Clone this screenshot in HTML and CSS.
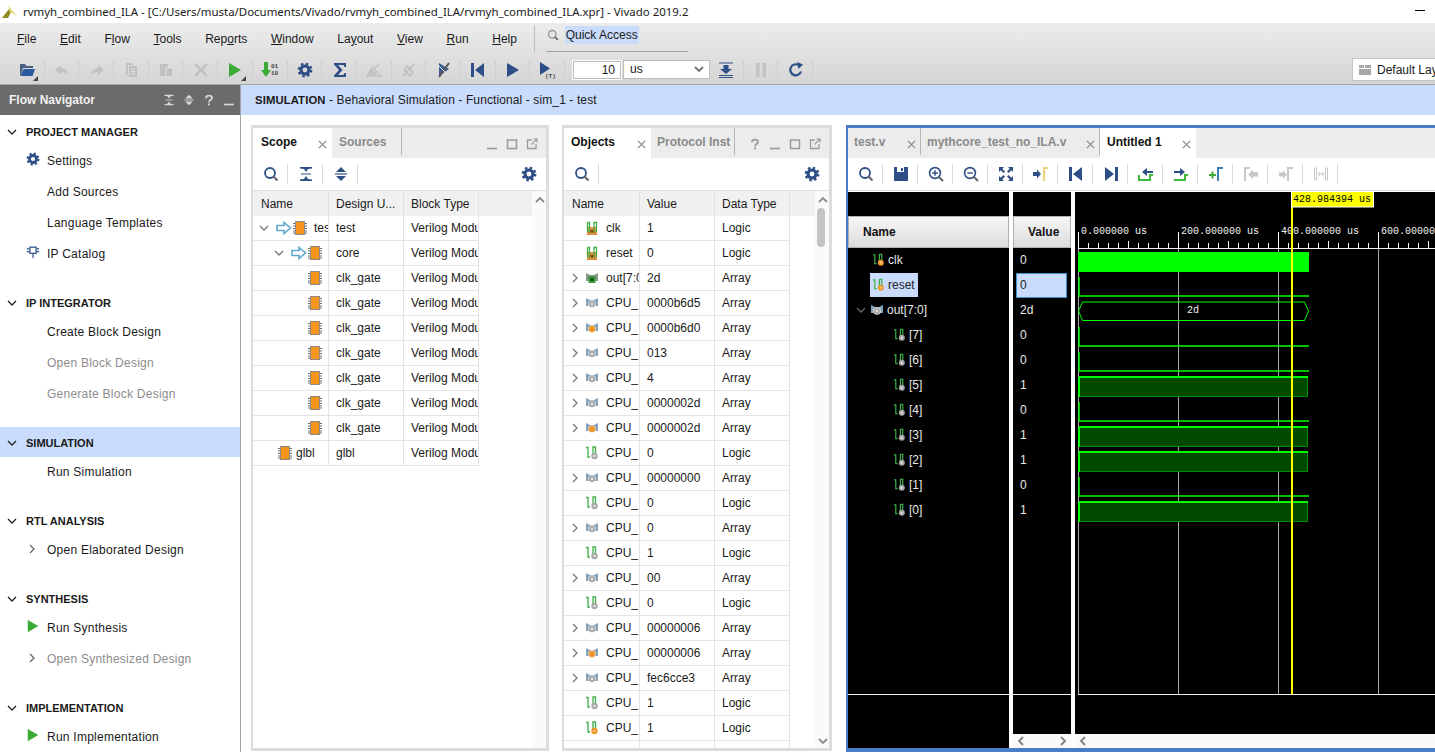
FILE: index.html
```html
<!DOCTYPE html>
<html lang="en">
  <head>
    <meta charset="UTF-8" />
    <title>rvmyh_combined_ILA - Vivado 2019.2</title>
    <link rel="stylesheet" href="styles.css">
  </head>
  <body>
    <!-- icon sheet -->
    <svg class="defs" width="0" height="0">
      <symbol id="gear" viewBox="0 0 16 16">
        <circle cx="8" cy="8" r="6.1" fill="none" stroke="currentColor" stroke-width="2.6" stroke-dasharray="2.4 2.39"/>
        <circle cx="8" cy="8" r="4" fill="none" stroke="currentColor" stroke-width="3.2"/>
      </symbol>
      <symbol id="search" viewBox="0 0 16 16">
        <circle cx="7" cy="7" r="5" fill="none" stroke="currentColor" stroke-width="1.8"/>
        <path d="M10.5 10.5l4 4" stroke="#666" stroke-width="2.2"/>
      </symbol>
      <symbol id="zoomin" viewBox="0 0 16 16">
        <circle cx="7" cy="7" r="5.4" fill="none" stroke="currentColor" stroke-width="1.6"/>
        <path d="M4.2 7h5.6M7 4.2v5.6" stroke="currentColor" stroke-width="1.4"/>
        <path d="M11 11l4 4" stroke="#666" stroke-width="2.2"/>
      </symbol>
      <symbol id="zoomout" viewBox="0 0 16 16">
        <circle cx="7" cy="7" r="5.4" fill="none" stroke="currentColor" stroke-width="1.6"/>
        <path d="M4.2 7h5.6" stroke="currentColor" stroke-width="1.4"/>
        <path d="M11 11l4 4" stroke="#666" stroke-width="2.2"/>
      </symbol>
      <symbol id="collapse" viewBox="0 0 16 16">
        <path d="M2 1h12v1.500l-4 .5-2 3-2-3-4-.5zM2 15h12v-1.500l-4-.5-2-3-2 3-4 .5z" fill="currentColor"/>
        <path d="M3 8h10" stroke="currentColor"/>
      </symbol>
      <symbol id="expand" viewBox="0 0 16 16">
        <path d="M8 1l5 5H3zM8 15l-5-5h10z" fill="currentColor"/>
        <path d="M2 8h12" stroke="currentColor" stroke-width="1.2"/>
      </symbol>
      <symbol id="close" viewBox="0 0 10 10">
        <path d="M1 1l8 8M9 1l-8 8" stroke="currentColor" stroke-width="1.4"/>
      </symbol>
      <symbol id="min" viewBox="0 0 12 12"><path d="M1 10.500h10" stroke="currentColor" stroke-width="1.6"/></symbol>
      <symbol id="max" viewBox="0 0 12 12"><rect x="1.500" y="2" width="9" height="8.500" fill="none" stroke="currentColor" stroke-width="1.5"/></symbol>
      <symbol id="pop" viewBox="0 0 12 12">
        <path d="M6 2H1.500v8.500H10V6" fill="none" stroke="currentColor" stroke-width="1.3"/>
        <path d="M5.500 6.500L11 1M7.500 1H11v3.500" fill="none" stroke="currentColor" stroke-width="1.1"/>
      </symbol>
      <symbol id="help" viewBox="0 0 12 16">
        <path d="M2 5.500C2 1 10 1 10 5c0 3-4 3-4 6" fill="none" stroke="currentColor" stroke-width="2.4"/>
        <rect x="4.700" y="12.500" width="2.600" height="2.600" fill="currentColor"/>
      </symbol>
      <symbol id="chev-d" viewBox="0 0 10 10"><path d="M1 3l4 4 4-4" fill="none" stroke="currentColor" stroke-width="1.3"/></symbol>
      <symbol id="chev-r" viewBox="0 0 10 10"><path d="M3 1l4 4-4 4" fill="none" stroke="currentColor" stroke-width="1.3"/></symbol>
      <symbol id="chev-u" viewBox="0 0 10 10"><path d="M1 7l4-4 4 4" fill="none" stroke="currentColor" stroke-width="1.8"/></symbol>
      <symbol id="chev-l" viewBox="0 0 10 10"><path d="M7 1L3 5l4 4" fill="none" stroke="currentColor" stroke-width="1.8"/></symbol>
      <symbol id="chev-rb" viewBox="0 0 10 10"><path d="M3 1l4 4-4 4" fill="none" stroke="currentColor" stroke-width="1.8"/></symbol>
      <symbol id="chev-db" viewBox="0 0 10 10"><path d="M1 3l4 4 4-4" fill="none" stroke="currentColor" stroke-width="1.8"/></symbol>
      <symbol id="play" viewBox="0 0 16 16"><path d="M2 1l12 7-12 7z" fill="currentColor"/></symbol>
      <symbol id="ipcat" viewBox="0 0 16 16">
        <rect x="4.500" y="2.500" width="7" height="7" fill="none" stroke="currentColor" stroke-width="1.4"/>
        <path d="M1 4.500h3M1 7.500h3M12 4.500h3M12 7.500h3M8 10v5" stroke="currentColor" stroke-width="1.3"/>
      </symbol>
      <symbol id="folder" viewBox="0 0 18 18">
        <path d="M2 3h5l1.500 2H15v2H5L3 14H2z" fill="#4a5f84"/>
        <path d="M5.500 8H17l-2.500 7H2.500z" fill="#2c5aa0"/>
      </symbol>
      <symbol id="undo" viewBox="0 0 16 16"><path d="M7 3L1 8l6 5v-3c3 0 5 1 7 3-.5-4-3-7-7-7z" fill="currentColor"/></symbol>
      <symbol id="redo" viewBox="0 0 16 16"><path d="M9 3l6 5-6 5v-3c-3 0-5 1-7 3 .5-4 3-7 7-7z" fill="currentColor"/></symbol>
      <symbol id="copy" viewBox="0 0 16 16">
        <path d="M3 1h7v2H5v10H3z" fill="currentColor"/>
        <path d="M6 4h8v11H6z" fill="currentColor"/>
        <path d="M8 7h4M8 9.500h4M8 12h4" stroke="#e2e2e2"/>
      </symbol>
      <symbol id="paste" viewBox="0 0 16 16">
        <path d="M2 2h8v12H2z" fill="currentColor"/>
        <path d="M8 6h7v9H8z" fill="currentColor" stroke="#e0e0e0"/>
      </symbol>
      <symbol id="cross" viewBox="0 0 16 16"><path d="M2 2l12 12M14 2L2 14" stroke="currentColor" stroke-width="2.6"/></symbol>
      <symbol id="sigma" viewBox="0 0 16 16"><path d="M2 1h12v4h-1.500l-1-2H6l4.500 5L6 13h5.500l1-2H14v4H2v-1.500L7 8 2 2.500z" fill="currentColor"/></symbol>
      <symbol id="nochk" viewBox="0 0 16 16">
        <path d="M1 14h14l-9-9zM6 9l7-7" fill="currentColor" stroke="currentColor" stroke-width="1.5"/>
        <path d="M3 3l10 11" stroke="#e0e0e0"/>
      </symbol>
      <symbol id="nopin" viewBox="0 0 16 16">
        <path d="M6 4l6 6-3 4-6-6zM13 2L2 14" fill="none" stroke="currentColor" stroke-width="1.8"/>
      </symbol>
      <symbol id="break" viewBox="0 0 16 16">
        <path d="M3 1l10 6-10 7z" fill="#3b5c94"/>
        <path d="M13 1L3 15" stroke="#555" stroke-width="2"/>
        <path d="M2 3l11 11" stroke="#e8e8e8"/>
      </symbol>
      <symbol id="first" viewBox="0 0 16 16"><path d="M1 1h3v14H1zM14 1v14L5 8z" fill="currentColor"/></symbol>
      <symbol id="last" viewBox="0 0 16 16"><path d="M15 1h-3v14h3zM2 1v14l9-7z" fill="currentColor"/></symbol>
      <symbol id="restart-in" viewBox="0 0 16 16">
        <path d="M1 1h14M1 13.500h14M1 15.500h14" stroke="currentColor" stroke-width="1.1"/>
        <path d="M5.500 3h5v4H14l-6 5-6-5h3.500z" fill="currentColor"/>
      </symbol>
      <symbol id="pause" viewBox="0 0 16 16"><path d="M3 1h3.500v14H3zM9.500 1H13v14H9.500z" fill="currentColor"/></symbol>
      <symbol id="reload" viewBox="0 0 16 16">
        <path d="M13 9.500A5.500 5.500 0 1 1 10.500 3" fill="none" stroke="currentColor" stroke-width="2.2"/>
        <path d="M9 0l6 2.500L10.500 7z" fill="currentColor"/>
      </symbol>
      <symbol id="layout" viewBox="0 0 14 12"><path d="M1 1h5v3H1zM7 1h6v3H7zM1 5h12v6H1z" fill="#a9a9a9"/></symbol>
      <symbol id="save" viewBox="0 0 16 16">
        <path d="M1 1h14v14H1z" fill="currentColor"/>
        <path d="M4 1h7v5H4z" fill="#fff"/>
        <path d="M8 2h2v3H8z" fill="currentColor"/>
      </symbol>
      <symbol id="fit" viewBox="0 0 16 16">
        <path d="M1 1h5L4.300 2.700 7 5.500 5.500 7 2.700 4.300 1 6zM15 1v5l-1.700-1.700L10.500 7 9 5.500l2.700-2.800L10 1zM1 15v-5l1.700 1.700L5.500 9 7 10.500l-2.700 2.800L6 15zM15 15h-5l1.700-1.700L9 10.500 10.500 9l2.800 2.700L15 10z" fill="currentColor"/>
      </symbol>
      <symbol id="gocur" viewBox="0 0 16 16">
        <path d="M0 6h4V3.500L8 8l-4 4.500V10H0z" fill="#2e4f86"/>
        <path d="M11 15V2h4" fill="none" stroke="#e8d77e" stroke-width="2.2"/>
      </symbol>
      <symbol id="prevedge" viewBox="0 0 16 16">
        <path d="M1 9v5h11V9h3" fill="none" stroke="#3dbb3d" stroke-width="2"/>
        <path d="M15 5H9V2L4 6l5 4V7h6z" fill="#2e4f86"/>
      </symbol>
      <symbol id="nextedge" viewBox="0 0 16 16">
        <path d="M1 14h11V9h3" fill="none" stroke="#3dbb3d" stroke-width="2"/>
        <path d="M1 5h6V2l5 4-5 4V7H1z" fill="#2e4f86"/>
      </symbol>
      <symbol id="addmark" viewBox="0 0 16 16">
        <path d="M1 9h7M4.500 5.500v7" stroke="#3aaa35" stroke-width="2"/>
        <path d="M10 15V2h5" fill="none" stroke="#3a7fb0" stroke-width="2"/>
      </symbol>
      <symbol id="prevmark" viewBox="0 0 16 16">
        <path d="M2 15V2h5" fill="none" stroke="#c8c8c8" stroke-width="2"/>
        <path d="M15 6h-5V3.500L5 8.500l5 4.500v-2.500h5z" fill="#c8c8c8"/>
      </symbol>
      <symbol id="nextmark" viewBox="0 0 16 16">
        <path d="M10 15V2h5" fill="none" stroke="#c8c8c8" stroke-width="2"/>
        <path d="M1 6.500h4V4l4 4.500L5 13v-2.500H1z" fill="#c8c8c8"/>
      </symbol>
      <symbol id="span" viewBox="0 0 16 16">
        <path d="M1.500 2v12h2V2zM12.500 2v12h2V2z" fill="none" stroke="#c8c8c8"/>
        <path d="M5 8h6M5 8l2-2M5 8l2 2M11 8L9 6M11 8l-2 2" fill="none" stroke="#c8c8c8"/>
      </symbol>
      <symbol id="chip" viewBox="0 0 14 14">
        <path d="M0 2.500h14M0 5h14M0 7.500h14M0 10h14M0 12h14" stroke="#6f6f6f"/>
        <rect x="2.500" y="0.500" width="9" height="13" fill="#f7941d" stroke="#8a8a8a"/>
      </symbol>
      <symbol id="arrow" viewBox="0 0 16 14">
        <path d="M1 4.500h7V1.500L14.500 7 8 12.500v-3H1z" fill="#fff" stroke="#5fa8cc" stroke-width="1.6"/>
      </symbol>
      <symbol id="port" viewBox="0 0 14 14">
        <rect x="2" y="6" width="10" height="8" fill="#e0903a"/>
        <path d="M2.500 11V1.500M2.500 1.500h2V12M9 12V1.500h2.500V11" fill="none" stroke="#3fae49" stroke-width="1.3"/>
        <rect x="5.500" y="9" width="3" height="2.500" fill="#7a4a12"/>
      </symbol>
      <symbol id="sig" viewBox="0 0 14 14">
        <path d="M1 1.500h2V11h2M8 11V1h2.500v6" fill="none" stroke="#3fae49" stroke-width="1.3"/>
        <circle cx="9.500" cy="10" r="3.200" fill="#a8a8a8"/>
        <circle cx="9.500" cy="10" r="1.200" fill="#e6e6e6"/>
      </symbol>
      <symbol id="sig-o" viewBox="0 0 14 14">
        <path d="M1 1.500h2V11h2M8 11V1h2.500v6" fill="none" stroke="#3fae49" stroke-width="1.3"/>
        <circle cx="9.500" cy="10" r="3.200" fill="#f0962a"/>
        <circle cx="9.500" cy="10" r="1.100" fill="#f9d49e"/>
      </symbol>
      <symbol id="arr" viewBox="0 0 14 14">
        <path d="M1 2l4 2h4l4-2v8H1z" fill="#88a4ba"/>
        <circle cx="7" cy="8" r="3.600" fill="#a8a8a8" stroke="#fff" stroke-width=".5"/>
        <circle cx="7" cy="8" r="1.200" fill="#e6e6e6"/>
      </symbol>
      <symbol id="arr-o" viewBox="0 0 14 14">
        <path d="M1 2l4 2h4l4-2v8H1z" fill="#88a4ba"/>
        <circle cx="7" cy="8" r="3.600" fill="#f0962a" stroke="#fff" stroke-width=".5"/>
      </symbol>
      <symbol id="arr-g" viewBox="0 0 14 14">
        <path d="M1 2l4 2h4l4-2v8H1z" fill="#8a9a8a"/>
        <rect x="3.500" y="5" width="7" height="7" fill="#3b9b3b"/>
        <rect x="5.500" y="7" width="3" height="3" fill="#134d13"/>
      </symbol>
      <pattern id="ticks" x="1078" y="230" width="100" height="18" patternUnits="userSpaceOnUse">
        <path d="M.5 2v16M10.500 13v5M20.500 13v5M30.500 13v5M40.500 13v5M50.500 11v7M60.500 13v5M70.500 13v5M80.500 13v5M90.500 13v5" stroke="#fff"/>
      </pattern>
    </svg>

    <div class="titlebar">
      <svg class="logo" viewBox="0 0 16 16"><path d="M0 14L7 5l2 3-3 6z" fill="#8f8a1e"/><path d="M6 1l3 4 6 7-7-4z" fill="#e3d87a"/></svg>
      <span class="title-text">rvmyh_combined_ILA - [C:/Users/musta/Documents/Vivado/rvmyh_combined_ILA/rvmyh_combined_ILA.xpr] - Vivado 2019.2</span>
      <span class="win-min"></span>
    </div>

    <div class="topbar">
      <div class="menubar">
        <span class="menu"><u>F</u>ile</span>
        <span class="menu"><u>E</u>dit</span>
        <span class="menu">F<u>l</u>ow</span>
        <span class="menu"><u>T</u>ools</span>
        <span class="menu">Rep<u>o</u>rts</span>
        <span class="menu"><u>W</u>indow</span>
        <span class="menu">La<u>y</u>out</span>
        <span class="menu"><u>V</u>iew</span>
        <span class="menu"><u>R</u>un</span>
        <span class="menu"><u>H</u>elp</span>
        <div class="quick">
          <svg class="quick-icon"><use href="#search"/></svg>
          <span class="quick-text">Quick Access</span>
        </div>
      </div>
      <div class="mainbar">
        <span class="tool nav"><svg class="i18"><use href="#folder"/></svg><i class="corner"></i></span>
        <span class="tool off"><svg class="i16"><use href="#undo"/></svg></span>
        <span class="tool off"><svg class="i16"><use href="#redo"/></svg></span>
        <span class="tool off"><svg class="i16"><use href="#copy"/></svg></span>
        <span class="tool off"><svg class="i16"><use href="#paste"/></svg></span>
        <span class="tool off"><svg class="i16"><use href="#cross"/></svg></span>
        <span class="tool green"><svg class="i16"><use href="#play"/></svg><i class="corner"></i></span>
        <span class="tool nav">
          <svg class="i18" viewBox="0 0 18 18">
            <path d="M3 1h4v8h3l-5 7-5-7h3z" fill="#3aaa35"/>
            <text x="10" y="7" class="bit">01</text>
            <text x="10" y="14" class="bit">10</text>
          </svg>
        </span>
        <span class="tool nav"><svg class="i16"><use href="#gear"/></svg></span>
        <span class="tool nav"><svg class="i16"><use href="#sigma"/></svg></span>
        <span class="tool off"><svg class="i16"><use href="#nochk"/></svg></span>
        <span class="tool off"><svg class="i16"><use href="#nopin"/></svg></span>
        <span class="tool nav"><svg class="i16"><use href="#break"/></svg></span>
        <span class="tool nav"><svg class="i16"><use href="#first"/></svg></span>
        <span class="tool nav"><svg class="i16"><use href="#play"/></svg></span>
        <span class="tool nav">
          <svg class="i18" viewBox="0 0 18 18">
            <path d="M1 1l10 6.500L1 14z" fill="currentColor"/>
            <text x="6" y="17" class="bit">(T)</text>
          </svg>
        </span>
        <div class="time-input">10</div>
        <div class="unit-select">us<svg class="unit-chev"><use href="#chev-db"/></svg></div>
        <span class="tool nav tool-in"><svg class="i16"><use href="#restart-in"/></svg></span>
        <span class="tool off"><svg class="i16"><use href="#pause"/></svg></span>
        <span class="tool nav"><svg class="i16"><use href="#reload"/></svg></span>
        <div class="layout-box"><svg class="layout-icon"><use href="#layout"/></svg>Default Layout</div>
      </div>
    </div>

    <div class="main">
      <div class="flownav">
        <div class="flownav-head">
          <span>Flow Navigator</span>
          <div class="flownav-btns">
            <svg class="i12"><use href="#collapse"/></svg>
            <svg class="i12"><use href="#expand"/></svg>
            <svg class="i12"><use href="#help"/></svg>
            <svg class="i12"><use href="#min"/></svg>
          </div>
        </div>
        <div class="flownav-list">
          <div class="section">
            <div class="heading"><svg class="head-chev"><use href="#chev-d"/></svg>PROJECT MANAGER</div>
            <div class="item"><svg class="item-icon nav"><use href="#gear"/></svg>Settings</div>
            <div class="item">Add Sources</div>
            <div class="item">Language Templates</div>
            <div class="item"><svg class="item-icon nav"><use href="#ipcat"/></svg>IP Catalog</div>
          </div>
          <div class="section">
            <div class="heading"><svg class="head-chev"><use href="#chev-d"/></svg>IP INTEGRATOR</div>
            <div class="item">Create Block Design</div>
            <div class="item dim">Open Block Design</div>
            <div class="item dim">Generate Block Design</div>
          </div>
          <div class="section">
            <div class="heading selected"><svg class="head-chev"><use href="#chev-d"/></svg>SIMULATION</div>
            <div class="item">Run Simulation</div>
          </div>
          <div class="section">
            <div class="heading"><svg class="head-chev"><use href="#chev-d"/></svg>RTL ANALYSIS</div>
            <div class="item"><svg class="item-chev"><use href="#chev-r"/></svg>Open Elaborated Design</div>
          </div>
          <div class="section">
            <div class="heading"><svg class="head-chev"><use href="#chev-d"/></svg>SYNTHESIS</div>
            <div class="item"><svg class="item-icon green"><use href="#play"/></svg>Run Synthesis</div>
            <div class="item dim"><svg class="item-chev"><use href="#chev-r"/></svg>Open Synthesized Design</div>
          </div>
          <div class="section">
            <div class="heading"><svg class="head-chev"><use href="#chev-d"/></svg>IMPLEMENTATION</div>
            <div class="item"><svg class="item-icon green"><use href="#play"/></svg>Run Implementation</div>
          </div>
        </div>
      </div>

      <div class="work">
        <div class="simbar"><b>SIMULATION</b> - Behavioral Simulation - Functional - sim_1 - test</div>
        <div class="panels">

          <!-- Scope -->
          <div class="panel scope">
            <div class="tabs">
              <div class="tab active tab-scope">Scope<svg class="tab-x"><use href="#close"/></svg></div>
              <div class="tab tab-sources">Sources</div>
              <div class="win-btns">
                <svg class="i12"><use href="#min"/></svg>
                <svg class="i12"><use href="#max"/></svg>
                <svg class="i12"><use href="#pop"/></svg>
              </div>
            </div>
            <div class="panelbar">
              <span class="tool nav"><svg class="i16"><use href="#search"/></svg></span>
              <span class="tool nav"><svg class="i16"><use href="#collapse"/></svg></span>
              <span class="tool nav"><svg class="i16"><use href="#expand"/></svg></span>
              <span class="tool nav end"><svg class="i16"><use href="#gear"/></svg></span>
            </div>
            <div class="panel-body">
              <div class="grid">
                <div class="thead"><div class="cell">Name</div><div class="cell">Design U...</div><div class="cell">Block Type</div></div>
                <div class="row"><div class="cell name tree0"><svg class="chev"><use href="#chev-d"/></svg><svg class="arrow"><use href="#arrow"/></svg><svg class="chip"><use href="#chip"/></svg><span class="chip-label">test</span></div><div class="cell">test</div><div class="cell">Verilog Module</div></div>
                <div class="row"><div class="cell name tree1"><svg class="chev"><use href="#chev-d"/></svg><svg class="arrow"><use href="#arrow"/></svg><svg class="chip"><use href="#chip"/></svg></div><div class="cell">core</div><div class="cell">Verilog Module</div></div>
                <div class="row"><div class="cell name tree2"><svg class="chip"><use href="#chip"/></svg></div><div class="cell">clk_gate</div><div class="cell">Verilog Module</div></div>
                <div class="row"><div class="cell name tree2"><svg class="chip"><use href="#chip"/></svg></div><div class="cell">clk_gate</div><div class="cell">Verilog Module</div></div>
                <div class="row"><div class="cell name tree2"><svg class="chip"><use href="#chip"/></svg></div><div class="cell">clk_gate</div><div class="cell">Verilog Module</div></div>
                <div class="row"><div class="cell name tree2"><svg class="chip"><use href="#chip"/></svg></div><div class="cell">clk_gate</div><div class="cell">Verilog Module</div></div>
                <div class="row"><div class="cell name tree2"><svg class="chip"><use href="#chip"/></svg></div><div class="cell">clk_gate</div><div class="cell">Verilog Module</div></div>
                <div class="row"><div class="cell name tree2"><svg class="chip"><use href="#chip"/></svg></div><div class="cell">clk_gate</div><div class="cell">Verilog Module</div></div>
                <div class="row"><div class="cell name tree2"><svg class="chip"><use href="#chip"/></svg></div><div class="cell">clk_gate</div><div class="cell">Verilog Module</div></div>
                <div class="row"><div class="cell name treeg"><svg class="chip"><use href="#chip"/></svg><span class="glbl">glbl</span></div><div class="cell">glbl</div><div class="cell">Verilog Module</div></div>
              </div>
              <div class="vscroll">
                <svg class="sb-chev"><use href="#chev-u"/></svg>
              </div>
            </div>
          </div>

          <!-- Objects -->
          <div class="panel objects">
            <div class="tabs">
              <div class="tab active tab-objects">Objects<svg class="tab-x"><use href="#close"/></svg></div>
              <div class="tab tab-proto">Protocol Inst</div>
              <div class="win-btns">
                <svg class="i12"><use href="#help"/></svg>
                <svg class="i12"><use href="#min"/></svg>
                <svg class="i12"><use href="#max"/></svg>
                <svg class="i12"><use href="#pop"/></svg>
              </div>
            </div>
            <div class="panelbar">
              <span class="tool nav"><svg class="i16"><use href="#search"/></svg></span>
              <span class="tool nav end"><svg class="i16"><use href="#gear"/></svg></span>
            </div>
            <div class="panel-body">
              <div class="grid">
                <div class="thead"><div class="cell">Name</div><div class="cell">Value</div><div class="cell">Data Type</div></div>
                <div class="row"><div class="cell name leaf"><svg class="obj"><use href="#port"/></svg><span>clk</span></div><div class="cell">1</div><div class="cell">Logic</div></div>
                <div class="row"><div class="cell name leaf"><svg class="obj"><use href="#port"/></svg><span>reset</span></div><div class="cell">0</div><div class="cell">Logic</div></div>
                <div class="row"><div class="cell name"><svg class="chev"><use href="#chev-r"/></svg><svg class="obj"><use href="#arr-g"/></svg><span>out[7:0]</span></div><div class="cell">2d</div><div class="cell">Array</div></div>
                <div class="row"><div class="cell name"><svg class="chev"><use href="#chev-r"/></svg><svg class="obj"><use href="#arr"/></svg><span>CPU_</span></div><div class="cell">0000b6d5</div><div class="cell">Array</div></div>
                <div class="row"><div class="cell name"><svg class="chev"><use href="#chev-r"/></svg><svg class="obj"><use href="#arr-o"/></svg><span>CPU_</span></div><div class="cell">0000b6d0</div><div class="cell">Array</div></div>
                <div class="row"><div class="cell name"><svg class="chev"><use href="#chev-r"/></svg><svg class="obj"><use href="#arr"/></svg><span>CPU_</span></div><div class="cell">013</div><div class="cell">Array</div></div>
                <div class="row"><div class="cell name"><svg class="chev"><use href="#chev-r"/></svg><svg class="obj"><use href="#arr"/></svg><span>CPU_</span></div><div class="cell">4</div><div class="cell">Array</div></div>
                <div class="row"><div class="cell name"><svg class="chev"><use href="#chev-r"/></svg><svg class="obj"><use href="#arr"/></svg><span>CPU_</span></div><div class="cell">0000002d</div><div class="cell">Array</div></div>
                <div class="row"><div class="cell name"><svg class="chev"><use href="#chev-r"/></svg><svg class="obj"><use href="#arr-o"/></svg><span>CPU_</span></div><div class="cell">0000002d</div><div class="cell">Array</div></div>
                <div class="row"><div class="cell name leaf"><svg class="obj"><use href="#sig"/></svg><span>CPU_</span></div><div class="cell">0</div><div class="cell">Logic</div></div>
                <div class="row"><div class="cell name"><svg class="chev"><use href="#chev-r"/></svg><svg class="obj"><use href="#arr"/></svg><span>CPU_</span></div><div class="cell">00000000</div><div class="cell">Array</div></div>
                <div class="row"><div class="cell name leaf"><svg class="obj"><use href="#sig"/></svg><span>CPU_</span></div><div class="cell">0</div><div class="cell">Logic</div></div>
                <div class="row"><div class="cell name"><svg class="chev"><use href="#chev-r"/></svg><svg class="obj"><use href="#arr"/></svg><span>CPU_</span></div><div class="cell">0</div><div class="cell">Array</div></div>
                <div class="row"><div class="cell name leaf"><svg class="obj"><use href="#sig"/></svg><span>CPU_</span></div><div class="cell">1</div><div class="cell">Logic</div></div>
                <div class="row"><div class="cell name"><svg class="chev"><use href="#chev-r"/></svg><svg class="obj"><use href="#arr"/></svg><span>CPU_</span></div><div class="cell">00</div><div class="cell">Array</div></div>
                <div class="row"><div class="cell name leaf"><svg class="obj"><use href="#sig"/></svg><span>CPU_</span></div><div class="cell">0</div><div class="cell">Logic</div></div>
                <div class="row"><div class="cell name"><svg class="chev"><use href="#chev-r"/></svg><svg class="obj"><use href="#arr"/></svg><span>CPU_</span></div><div class="cell">00000006</div><div class="cell">Array</div></div>
                <div class="row"><div class="cell name"><svg class="chev"><use href="#chev-r"/></svg><svg class="obj"><use href="#arr-o"/></svg><span>CPU_</span></div><div class="cell">00000006</div><div class="cell">Array</div></div>
                <div class="row"><div class="cell name"><svg class="chev"><use href="#chev-r"/></svg><svg class="obj"><use href="#arr"/></svg><span>CPU_</span></div><div class="cell">fec6cce3</div><div class="cell">Array</div></div>
                <div class="row"><div class="cell name leaf"><svg class="obj"><use href="#sig"/></svg><span>CPU_</span></div><div class="cell">1</div><div class="cell">Logic</div></div>
                <div class="row"><div class="cell name leaf"><svg class="obj"><use href="#sig-o"/></svg><span>CPU_</span></div><div class="cell">1</div><div class="cell">Logic</div></div>
                <div class="row"><div class="cell"></div><div class="cell"></div><div class="cell"></div></div>
              </div>
              <div class="vscroll">
                <svg class="sb-chev"><use href="#chev-u"/></svg>
                <div class="sb-thumb"></div>
                <svg class="sb-chev sb-down"><use href="#chev-db"/></svg>
              </div>
            </div>
          </div>

          <!-- Wave window -->
          <div class="panel waves">
            <div class="tabs">
              <div class="tab tab-test">test.v<svg class="tab-x"><use href="#close"/></svg></div>
              <div class="tab tab-myth">mythcore_test_no_ILA.v<svg class="tab-x"><use href="#close"/></svg></div>
              <div class="tab active tab-untitled">Untitled 1<svg class="tab-x"><use href="#close"/></svg></div>
            </div>
            <div class="panelbar">
              <span class="tool nav"><svg class="i16"><use href="#search"/></svg></span>
              <span class="tool nav"><svg class="i16"><use href="#save"/></svg></span>
              <span class="tool nav"><svg class="i16"><use href="#zoomin"/></svg></span>
              <span class="tool nav"><svg class="i16"><use href="#zoomout"/></svg></span>
              <span class="tool nav"><svg class="i16"><use href="#fit"/></svg></span>
              <span class="tool"><svg class="i16"><use href="#gocur"/></svg></span>
              <span class="tool nav"><svg class="i16"><use href="#first"/></svg></span>
              <span class="tool nav"><svg class="i16"><use href="#last"/></svg></span>
              <span class="tool"><svg class="i16"><use href="#prevedge"/></svg></span>
              <span class="tool"><svg class="i16"><use href="#nextedge"/></svg></span>
              <span class="tool"><svg class="i16"><use href="#addmark"/></svg></span>
              <span class="tool"><svg class="i16"><use href="#prevmark"/></svg></span>
              <span class="tool"><svg class="i16"><use href="#nextmark"/></svg></span>
              <span class="tool"><svg class="i16"><use href="#span"/></svg></span>
            </div>
            <div class="wave-body">
              <div class="wave-names">
                <div class="wave-head"><div class="head-btn head-name">Name</div></div>
                <div class="wave-rows">
                  <div class="wrow"><svg class="sigicon"><use href="#sig-o"/></svg>clk</div>
                  <div class="wrow"><span class="wsel"><svg class="sigicon"><use href="#sig-o"/></svg>reset</span></div>
                  <div class="wrow"><svg class="wchev"><use href="#chev-d"/></svg><svg class="sigicon busicon"><use href="#arr"/></svg>out[7:0]</div>
                  <div class="wrow child"><svg class="sigicon"><use href="#sig"/></svg>[7]</div>
                  <div class="wrow child"><svg class="sigicon"><use href="#sig"/></svg>[6]</div>
                  <div class="wrow child"><svg class="sigicon"><use href="#sig"/></svg>[5]</div>
                  <div class="wrow child"><svg class="sigicon"><use href="#sig"/></svg>[4]</div>
                  <div class="wrow child"><svg class="sigicon"><use href="#sig"/></svg>[3]</div>
                  <div class="wrow child"><svg class="sigicon"><use href="#sig"/></svg>[2]</div>
                  <div class="wrow child"><svg class="sigicon"><use href="#sig"/></svg>[1]</div>
                  <div class="wrow child"><svg class="sigicon"><use href="#sig"/></svg>[0]</div>
                </div>
              </div>
              <div class="wave-values">
                <div class="wave-head"><div class="head-btn head-value">Value</div></div>
                <div class="wave-rows">
                  <div class="wrow">0</div>
                  <div class="wrow"><span class="vsel">0</span></div>
                  <div class="wrow">2d</div>
                  <div class="wrow">0</div>
                  <div class="wrow">0</div>
                  <div class="wrow">1</div>
                  <div class="wrow">0</div>
                  <div class="wrow">1</div>
                  <div class="wrow">1</div>
                  <div class="wrow">0</div>
                  <div class="wrow">1</div>
                </div>
                <div class="hscroll">
                  <svg class="hs-chev"><use href="#chev-l"/></svg>
                  <svg class="hs-chev"><use href="#chev-rb"/></svg>
                </div>
              </div>
              <div class="wave-canvas">
                <svg class="wave-svg" viewBox="1075 192 360 542" width="360" height="542">
                  <!-- time grid -->
                  <path d="M1078.500 248v446M1178.500 248v446M1278.500 248v446M1378.500 248v446" stroke="#a8a8a8"/>
                  <rect x="1078" y="230" width="357" height="18" fill="url(#ticks)"/>
                  <path d="M1078 248.500h357M1078 694.500h357" stroke="#f0f0f0"/>
                  <text class="ruler" x="1081" y="234">0.000000 us</text>
                  <text class="ruler" x="1181" y="234">200.000000 us</text>
                  <text class="ruler" x="1281" y="234">400.000000 us</text>
                  <text class="ruler" x="1381" y="234">600.000000 us</text>

                  <!-- clk -->
                  <rect x="1078" y="252" width="231" height="20" fill="#00ff00"/>
                  <!-- reset -->
                  <path d="M1079 277v19h230" class="low"/>
                  <!-- out bus -->
                  <path d="M1078.500 311l4-9h222l4 9-4 9.500h-222z" class="bus"/>
                  <text class="ruler" x="1187" y="313">2d</text>
                  <!-- bits -->
                  <path d="M1079 327v19h230" class="low"/>
                  <path d="M1079 352v19h230" class="low"/>
                  <path d="M1079 402v19h230" class="low"/>
                  <path d="M1079 477v19h230" class="low"/>
                  <g class="high">
                    <rect x="1079.500" y="377.500" width="228" height="19"/>
                    <rect x="1079.500" y="427.500" width="228" height="19"/>
                    <rect x="1079.500" y="452.500" width="228" height="19"/>
                    <rect x="1079.500" y="502.500" width="228" height="19"/>
                  </g>
                  <path d="M1079 377h229M1079 377v20M1079 427h229M1079 427v20M1079 452h229M1079 452v20M1079 502h229M1079 502v20" class="edge"/>
                  <!-- cursor -->
                  <path d="M1292 207v487.500" stroke="#ffff00" stroke-width="2"/>
                  <rect x="1291.500" y="191.500" width="82" height="15.500" fill="#ffff00" stroke="#fff"/>
                  <text class="cursor-label" x="1293" y="202">428.984394 us</text>
                </svg>
                <div class="hscroll">
                  <svg class="hs-chev"><use href="#chev-l"/></svg>
                </div>
              </div>
            </div>
          </div>

        </div>
      </div>
    </div>
  </body>
</html>
```

FILE: styles.css
```css
* {
  box-sizing: border-box;
}

html,
body {
  margin: 0;
  height: 752px;
  overflow: hidden;
}

body {
  display: flex;
  flex-direction: column;
  background: #fff;
  color: #1a1a1a;
  font-family: "Liberation Sans", Arial, sans-serif;
  font-size: 12px;
}

svg {
  flex: none;
  display: block;
}

.defs {
  position: absolute;
}

.bit {
  font-family: "Liberation Mono", monospace;
  font-size: 6px;
  font-weight: bold;
  fill: #444;
}

.i12 { width: 12px; height: 12px; }
.i16 { width: 16px; height: 16px; }
.i18 { width: 18px; height: 18px; }

/* title bar */
.titlebar {
  height: 23px;
  flex: none;
  display: flex;
  align-items: center;
  padding-left: 2px;
}

.logo {
  width: 16px;
  height: 16px;
  margin-right: 5px;
}

.title-text {
  font-family: "Noto Sans", sans-serif;
  font-size: 11.45px;
  white-space: nowrap;
}

.win-min {
  margin-left: auto;
  margin-right: 10px;
  width: 10px;
  height: 1px;
  background: #000;
  margin-top: -3px;
}

/* menu + main toolbar */
.topbar {
  height: 62px;
  flex: none;
  background: linear-gradient(#ececec, #d5d5d5);
  border-bottom: 1px solid #a5a5a5;
}

.menubar {
  height: 32px;
  display: flex;
  align-items: center;
  gap: 23.7px;
  padding-left: 17px;
}

.menu {
  white-space: nowrap;
}

.quick {
  position: relative;
  display: flex;
  align-items: center;
  height: 27px;
  width: 142px;
  margin-left: 5px;
  margin-top: -2px;
  border-bottom: 1px solid #a0a0a0;
}

.quick::before {
  content: "";
  position: absolute;
  left: -12px;
  top: 0;
  width: 1px;
  height: 27px;
  background: #bdbdbd;
}

.quick-icon {
  width: 12px;
  height: 12px;
  margin: 0 6px 5px 1px;
  color: #999;
}

.quick-text {
  background: #c9dcfb;
  height: 18px;
  line-height: 18px;
  padding: 0 1px;
  margin-bottom: 5px;
}

.mainbar {
  height: 29px;
  display: flex;
  align-items: center;
  padding-left: 10px;
  overflow: hidden;
}

.tool {
  flex: none;
  position: relative;
  width: 35px;
  height: 29px;
  display: flex;
  align-items: center;
  justify-content: center;
  background: linear-gradient(#d8d8d8, #d8d8d8) right center / 1px 20px no-repeat;
}

.mainbar .tool {
  width: 34.7px;
  background-image: linear-gradient(#cfcfcf, #cfcfcf);
}

.nav { color: #2e4f86; }
.off { color: #c2c2c2; }
.green { color: #3aaa35; }

.corner {
  position: absolute;
  right: 7px;
  bottom: 3px;
  border-left: 5px solid transparent;
  border-bottom: 5px solid #444;
}

.time-input {
  width: 50px;
  height: 20px;
  margin-left: 7px;
  padding-right: 6px;
  border: 1px solid #fff;
  outline: 1px solid #bbb;
  outline-offset: -2px;
  background: #fff;
  text-align: right;
  line-height: 18px;
}

.unit-select {
  position: relative;
  width: 87px;
  height: 19px;
  margin-left: 1px;
  padding-left: 6px;
  background: #fff;
  border: 1px solid #bdbdbd;
  line-height: 17px;
}

.unit-chev {
  position: absolute;
  right: 5px;
  top: 3px;
  width: 10px;
  height: 10px;
  color: #707070;
}

.tool-in {
  margin-left: -1px;
}

.layout-box {
  flex: none;
  margin-left: auto;
  width: 83px;
  height: 23px;
  display: flex;
  align-items: center;
  padding-left: 5px;
  background: #fff;
  border: 1px solid #c4c4c4;
  border-right: 0;
  white-space: nowrap;
  overflow: hidden;
}

.layout-icon {
  width: 14px;
  height: 12px;
  margin-right: 5px;
}

/* main area */
.main {
  flex: 1;
  display: flex;
  min-height: 0;
}

.flownav {
  width: 241px;
  flex: none;
  border-right: 1px solid #a5a5a5;
  overflow: hidden;
}

.flownav-head {
  height: 30px;
  display: flex;
  align-items: center;
  justify-content: space-between;
  padding: 0 5px 1px 9px;
  background: #6b6b6b;
  color: #f0f0f0;
  font-weight: bold;
}

.flownav-btns {
  display: flex;
  gap: 8px;
  color: #d8d8d8;
}

.flownav-list {
  padding-top: 5px;
}

.section {
  margin-bottom: 22px;
}

.heading {
  height: 25px;
  display: flex;
  align-items: center;
  padding: 0 0 1px 7px;
  font-size: 11px;
  font-weight: bold;
}

.head-chev {
  width: 10px;
  height: 10px;
  margin-right: 9px;
  color: #222;
}

.selected {
  height: 30px;
  margin: -4px 0 -1px;
  background: #c9dcfb;
  padding: 1px 0 0 7px;
}

.item {
  position: relative;
  height: 31px;
  display: flex;
  align-items: center;
  padding-left: 47px;
  letter-spacing: .25px;
  white-space: nowrap;
}

.dim {
  color: #8c8c8c;
}

.item-icon {
  position: absolute;
  left: 26px;
  top: 7px;
  width: 14px;
  height: 14px;
}

.item-chev {
  position: absolute;
  left: 27px;
  top: 10px;
  width: 10px;
  height: 10px;
  color: #666;
}

.work {
  flex: 1;
  display: flex;
  flex-direction: column;
  min-width: 0;
}

.simbar {
  height: 30px;
  flex: none;
  line-height: 30px;
  padding-left: 14px;
  background: #c9dcfb;
  letter-spacing: .11px;
}

.simbar b {
  font-size: 11.3px;
}

.panels {
  flex: 1;
  display: flex;
  min-height: 0;
  padding: 10px 0 0 10px;
}

.panel {
  display: flex;
  flex-direction: column;
  overflow: hidden;
  border: solid #dcdcdc;
  border-width: 3px 3px 3px 2px;
}

.scope {
  width: 298px;
  margin: 0 13px 1px 0;
}

.objects {
  width: 270px;
  margin: 0 14px 1px 0;
}

.waves {
  flex: 1;
  border-color: #4a7dc8;
  border-width: 3px 0 4px 2px;
  min-width: 0;
}

.tabs {
  height: 30px;
  flex: none;
  display: flex;
  background: #ececec;
}

.tab {
  position: relative;
  display: flex;
  align-items: center;
  padding: 0 0 3px 7px;
  color: #8a8a8a;
  font-weight: bold;
  white-space: nowrap;
}

.tab::after {
  content: "";
  position: absolute;
  right: 0;
  top: 0;
  bottom: 3px;
  width: 1px;
  background: #b5b5b5;
}

.active {
  background: #fff;
  color: #111;
}

.active::after {
  display: none;
}

.tab-x {
  position: absolute;
  right: 5px;
  top: 12px;
  width: 9px;
  height: 9px;
  color: #8a8a8a;
}

.tab-scope { width: 79px; padding-left: 8px; }
.tab-sources { width: 70px; }
.tab-objects { width: 87px; }
.tab-proto { width: 84px; padding-left: 6px; }
.tab-test { width: 73px; padding-left: 6px; }
.tab-myth { width: 179px; padding-left: 6px; }
.tab-untitled { width: 96px; }

.win-btns {
  margin-left: auto;
  display: flex;
  align-items: center;
  gap: 8px;
  padding: 2px 8px 0 0;
  color: #9a9a9a;
}

.panelbar {
  height: 33px;
  flex: none;
  display: flex;
  align-items: center;
  padding-bottom: 1px;
  border-bottom: 1px solid #dedede;
}

.panelbar .tool {
  height: 32px;
}

.end {
  margin-left: auto;
  background: none;
}

.panel-body {
  flex: 1;
  display: flex;
  min-height: 0;
}

.grid {
  flex: 1;
  min-width: 0;
  overflow: hidden;
}

.thead {
  height: 25px;
  display: flex;
  background: #f0f0f0;
}

.thead .cell {
  border-right-color: #e2e2e2;
}

.row {
  width: 226px;
  height: 25px;
  display: flex;
  border-bottom: 1px solid #e4e4e4;
}

.cell {
  flex: none;
  width: 75px;
  height: 100%;
  display: flex;
  align-items: center;
  padding-left: 7px;
  border-right: 1px solid #e4e4e4;
  overflow: hidden;
  white-space: nowrap;
}

.cell:first-child {
  width: 76px;
  padding-left: 8px;
}

.cell.name {
  padding-left: 6px;
}

.name span {
  margin-left: 6px;
}

.cell.leaf {
  padding-left: 20px;
}

.chev {
  width: 10px;
  height: 10px;
  margin-right: 4px;
  color: #777;
}

.obj {
  width: 16px;
  height: 14px;
}

.cell.tree1 { padding-left: 21px; }
.cell.tree2 { padding-left: 55px; }
.cell.treeg { padding-left: 25px; }

.arrow {
  width: 16px;
  height: 14px;
  margin: 0 1px 0 3px;
}

.chip {
  width: 14px;
  height: 14px;
}

.name .chip-label {
  margin-left: 7px;
}

.name .glbl {
  margin-left: 4px;
}

.vscroll {
  width: 14px;
  flex: none;
  position: relative;
  background: #fafafa;
  color: #8c8c8c;
}

.sb-chev {
  width: 10px;
  height: 10px;
  margin: 4px 0 0 3px;
}

.sb-down {
  position: absolute;
  bottom: 2px;
  left: 0;
}

.sb-thumb {
  width: 8px;
  height: 39px;
  margin: 3px 0 0 2px;
  border-radius: 4px;
  background: #c4c4c4;
}

/* wave viewer */
.wave-body {
  flex: 1;
  display: flex;
  min-height: 0;
  margin-top: 1px;
  background: #fff;
}

.wave-names,
.wave-values,
.wave-canvas {
  display: flex;
  flex-direction: column;
  background: #000;
  color: #fff;
}

.wave-names {
  width: 161px;
  margin-right: 4px;
}

.wave-values {
  width: 58px;
  margin-right: 4px;
}

.wave-canvas {
  flex: 1;
  min-width: 0;
}

.wave-svg {
  flex: 1;
}

.wave-head {
  height: 56px;
  flex: none;
  padding-top: 24px;
}

.head-btn {
  height: 32px;
  display: flex;
  align-items: center;
  font-weight: bold;
  color: #111;
  background: linear-gradient(#f6f6f6, #dcdcdc);
  border: 1px solid #b0b0b0;
}

.head-name { padding-left: 14px; }
.head-value { padding-left: 14px; }

.wave-rows {
  height: 447px;
  flex: none;
  border-bottom: 1px solid #f0f0f0;
}

.wrow {
  height: 25px;
  display: flex;
  align-items: center;
  padding: 0 0 1px 24px;
  color: #e8e8e8;
  white-space: nowrap;
}

.wave-values .wrow {
  padding-left: 7px;
}

.child {
  padding-left: 45px;
}

.sigicon {
  width: 13px;
  height: 14px;
  margin-right: 3px;
}

.busicon {
  width: 14px;
}

.wchev {
  width: 10px;
  height: 10px;
  margin: 0 4px 0 -16px;
  color: #666;
}

.wsel {
  display: flex;
  align-items: center;
  height: 24px;
  margin-left: -2px;
  padding: 0 3px 0 2px;
  background: #c9dcfb;
  color: #222;
}

.wave-values .wrow .vsel {
  width: 51px;
  height: 25px;
  margin-left: -4px;
  padding-left: 3px;
  line-height: 23px;
  background: #c9dcfb;
  border: 1px solid #3c8fd0;
  color: #222;
}

.hscroll {
  height: 14px;
  flex: none;
  margin-top: auto;
  display: flex;
  justify-content: space-between;
  align-items: center;
  padding: 0 3px;
  background: #fafafa;
  color: #808080;
}

.wave-values .hscroll {
  margin-top: 39px;
}

.hs-chev {
  width: 10px;
  height: 10px;
}

.ruler {
  font-family: "Liberation Mono", monospace;
  font-size: 10px;
  fill: #f0f0f0;
}

.cursor-label {
  font-family: "Liberation Mono", monospace;
  font-size: 10px;
  fill: #000;
}

.low {
  fill: none;
  stroke: #00ff00;
  stroke-width: 1.5;
}

.bus {
  fill: none;
  stroke: #00ff00;
}

.high rect {
  fill: #004a00;
  stroke: #008c00;
}

.edge {
  fill: none;
  stroke: #00ff00;
  stroke-width: 2;
}
```
